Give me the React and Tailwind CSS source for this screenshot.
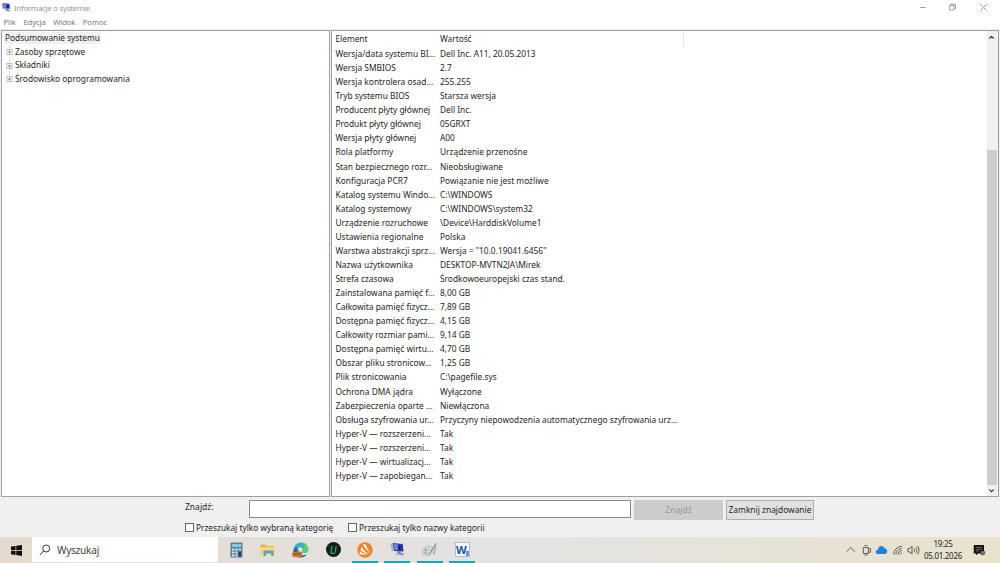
import React from "react";

const rows = [
  ["Wersja/data systemu BI...", "Dell Inc. A11, 20.05.2013"],
  ["Wersja SMBIOS", "2.7"],
  ["Wersja kontrolera osad...", "255.255"],
  ["Tryb systemu BIOS", "Starsza wersja"],
  ["Producent płyty głównej", "Dell Inc."],
  ["Produkt płyty głównej", "05GRXT"],
  ["Wersja płyty głównej", "A00"],
  ["Rola platformy", "Urządzenie przenośne"],
  ["Stan bezpiecznego rozr...", "Nieobsługiwane"],
  ["Konfiguracja PCR7", "Powiązanie nie jest możliwe"],
  ["Katalog systemu Windo...", "C:\\WINDOWS"],
  ["Katalog systemowy", "C:\\WINDOWS\\system32"],
  ["Urządzenie rozruchowe", "\\Device\\HarddiskVolume1"],
  ["Ustawienia regionalne", "Polska"],
  ["Warstwa abstrakcji sprz...", "Wersja = \"10.0.19041.6456\""],
  ["Nazwa użytkownika", "DESKTOP-MVTN2JA\\Mirek"],
  ["Strefa czasowa", "Środkowoeuropejski czas stand."],
  ["Zainstalowana pamięć f...", "8,00 GB"],
  ["Całkowita pamięć fizycz...", "7,89 GB"],
  ["Dostępna pamięć fizycz...", "4,15 GB"],
  ["Całkowity rozmiar pami...", "9,14 GB"],
  ["Dostępna pamięć wirtu...", "4,70 GB"],
  ["Obszar pliku stronicow...", "1,25 GB"],
  ["Plik stronicowania", "C:\\pagefile.sys"],
  ["Ochrona DMA jądra", "Wyłączone"],
  ["Zabezpieczenia oparte ...", "Niewłączona"],
  ["Obsługa szyfrowania ur...", "Przyczyny niepowodzenia automatycznego szyfrowania urz..."],
  ["Hyper-V — rozszerzeni...", "Tak"],
  ["Hyper-V — rozszerzeni...", "Tak"],
  ["Hyper-V — wirtualizacj...", "Tak"],
  ["Hyper-V — zapobiegan...", "Tak"],
];

function SystemIcon({ className }) {
  return (
    <svg className={className} viewBox="0 0 16 16">
      <path d="M.5 2l3-1 1.500 8.500-3 .5z" fill="#aab3cb" />
      <path d="M3 1L13.500 2 14.500 10 4.500 9.500z" fill="#2b3cb4" />
      <path d="M4 2l4 .4.500 6-3.700-.3z" fill="#6f8ae6" />
      <path d="M9 5l1.500-2 .8 6-2-.200zM12 3l.8.1.7 4-1-.2z" fill="#141c78" />
      <path d="M7.500 9.700l3.500.3.500 1.500 3.500 1-1.500 2-8-1.200 2.500-1.500z" fill="#7a8398" />
      <path d="M6.500 12.800l6.500 1" stroke="#d5d9e3" strokeWidth=".8" />
    </svg>
  );
}

function TreeNode({ label, last }) {
  return (
    <div className="flex h-[13.5px] items-center pl-[4px]">
      <svg className="mr-[2px] h-[13.5px] w-[7px] shrink-0" viewBox="0 0 7 13.500">
        <path d={last ? "M3.500 0V7" : "M3.500 0V13.500"} stroke="#b5b5b5" strokeWidth=".7" strokeDasharray="1 1" />
        <rect x=".9" y="4.400" width="5.200" height="5.200" fill="#fff" stroke="#b0b0b0" strokeWidth=".8" />
        <path d="M2 7h3M3.500 5.500v3" stroke="#777" strokeWidth=".8" />
      </svg>
      <span className="text-[8.35px]">{label}</span>
    </div>
  );
}

function Checkbox({ label, className }) {
  return (
    <label className={"flex items-center gap-[2px] " + className}>
      <span className="size-[9px] border border-[#666] bg-white" />
      <span>{label}</span>
    </label>
  );
}

function TaskItem({ children, running }) {
  return (
    <div className="relative flex h-full w-[32.3px] items-center justify-center pb-[1px]">
      {children}
      {running && <span className="absolute bottom-0 left-[3px] h-[2px] w-[26px] bg-[#22a5aa]" />}
    </div>
  );
}

export default function App() {
  return (
    <div className="flex h-[563px] w-[1000px] flex-col overflow-hidden bg-[#f0f0f0] font-['Noto_Sans','Open_Sans',sans-serif] text-[8.3px] leading-[14px] whitespace-nowrap text-[#262626]">
      <header className="flex h-[15px] shrink-0 items-center bg-white text-[#999]">
        <SystemIcon className="ml-[1px] h-[11px] w-[10px]" />
        <span className="ml-[3px] text-[7.9px] tracking-[-0.29px]">Informacje o systemie</span>
        <svg className="ml-auto h-[15px] w-[80px]" viewBox="0 0 80 15" fill="none" stroke="#999" strokeWidth=".9">
          <path d="M0 7.500h6" />
          <path d="M29.500 5.500h4.500v4.500h-4.500zM30.800 5.200V4.200h4.700v4.500h-1.200" />
          <path d="M60.500 4.500l6 6m0-6l-6 6" />
        </svg>
      </header>
      <nav className="flex h-[14px] shrink-0 items-center gap-[7.5px] bg-white pl-[3.5px] text-[7.6px] tracking-[-0.05px] text-[#777]">
        <span>Plik</span><span>Edycja</span><span>Widok</span><span>Pomoc</span>
      </nav>

      <main className="flex h-[468px] shrink-0 gap-[1px] px-[1px] pt-[1px]">
        <aside className="w-[329px] border border-[#a0a0a0] bg-white pt-[0.5px]">
          <div className="flex h-[13.5px] items-center pl-[2px]">
            <span className="bg-[#f0f0f0] px-[1px] leading-[12px]">Podsumowanie systemu</span>
          </div>
          <TreeNode label="Zasoby sprzętowe" />
          <TreeNode label="Składniki" />
          <TreeNode label="Środowisko oprogramowania" last />
        </aside>
        <section className="flex w-[668px] border border-[#a0a0a0] bg-white">
          <div className="flex-1 overflow-hidden">
            <div className="flex h-[16px] w-[352px] items-center border-r border-[#e5e5e5] pl-[3.5px]">
              <span className="w-[104.5px]">Element</span>
              <span>Wartość</span>
            </div>
            {rows.map(([name, value], i) => (
              <div key={i} className="flex h-[14.065px] items-center pl-[3.5px]">
                <span className="w-[104.5px] shrink-0 text-[8.4px]">{name}</span>
                <span className="text-[8.35px]">{value}</span>
              </div>
            ))}
          </div>
          <div className="flex w-[11px] flex-col bg-[#f0f0f0]">
            <svg className="h-[12px] w-[9px]" viewBox="0 0 9 12" fill="none" stroke="#444" strokeWidth="1.200"><path d="M2.300 7.500l2.200-2.200 2.200 2.200" /></svg>
            <div className="h-[107px]" />
            <div className="w-[10px] flex-1 bg-[#cdcdcd]" />
            <svg className="h-[11px] w-[9px]" viewBox="0 0 9 11" fill="none" stroke="#444" strokeWidth="1.200"><path d="M2.300 4.500l2.200 2.200 2.200-2.200" /></svg>
          </div>
        </section>
      </main>

      <section className="h-[40px] shrink-0 pt-[2px]">
        <div className="flex h-[20px] items-start pl-[185px]">
          <span className="w-[64px] pt-[1px] text-[8.5px]">Znajdź:</span>
          <span className="mt-[1px] h-[18px] w-[382px] border border-[#8a8a8a] bg-white" />
          <button className="mt-[1px] ml-[3px] h-[20px] w-[89px] bg-[#cccccc] text-[8.5px] text-[#999]">Znajdź</button>
          <button className="mt-[1px] ml-[3px] h-[20px] w-[88px] border border-[#adadad] bg-[#e1e1e1] text-[8.4px] leading-[18px]">Zamknij znajdowanie</button>
        </div>
        <div className="flex h-[16px] items-center pt-[1px] pl-[185px]">
          <Checkbox label="Przeszukaj tylko wybraną kategorię" className="w-[163px]" />
          <Checkbox label="Przeszukaj tylko nazwy kategorii" className="" />
        </div>
      </section>

      <footer className="flex h-[26px] shrink-0 bg-linear-to-r from-[#e5dacd] via-[#e4e3e3] to-[#e9e2cd]">
        <div className="flex w-[32px] items-center justify-center">
          <svg className="h-[11px] w-[11px]" viewBox="0 0 11 11"><path d="M0 1.600L4.600.9v4.200H0zM5.200.8L11 0v5.100H5.200zM0 5.700h4.600v4.300L0 9.300zM5.200 5.700H11V11l-5.800-.9z" fill="#111" /></svg>
        </div>
        <div className="flex h-[25px] w-[186px] items-center bg-white pl-[7px]">
          <svg className="h-[12px] w-[12px]" viewBox="0 0 12 12" fill="none" stroke="#333" strokeWidth="1"><circle cx="7.200" cy="4.500" r="3.500" /><path d="M4.700 7L.8 11" /></svg>
          <span className="ml-[6px] text-[10.1px] tracking-[-0.25px] text-[#444]">Wyszukaj</span>
        </div>
        <div className="ml-[2px] flex">
          <TaskItem>
            <svg className="h-[16px] w-[13px]" viewBox="0 0 13 16">
              <rect x=".5" y=".5" width="12" height="15" rx=".8" fill="#5e7e92" />
              <rect x="2" y="2" width="9" height="3" fill="#6cd4ee" />
              <path d="M2 6.500h2.300v2H2zM5.300 6.500h2.300v2H5.300zM2 9.500h2.300v2H2zM5.300 9.500h2.300v2H5.300zM2 12.500h2.300v2H2zM5.300 12.500h2.300v2H5.300zM8.700 6.500H11v2H8.700z" fill="#d7e3e8" />
              <path d="M8.700 9.500H11v5H8.700z" fill="#123f68" />
            </svg>
          </TaskItem>
          <TaskItem>
            <svg className="h-[14px] w-[16px]" viewBox="0 0 16 14">
              <path d="M.5 1.500h5l1.500 1.500H14v9H.5z" fill="#e9b548" />
              <path d="M.5 4h14.500v8H.5z" fill="#fbd877" />
              <path d="M3.500 7.500h10V13h-2.300v-2.700H5.800V13H3.500z" fill="#4ba3dc" />
            </svg>
          </TaskItem>
          <TaskItem>
            <svg className="h-[16px] w-[17px]" viewBox="0 0 17 16">
              <path d="M8.700.4c4.300 0 7.600 3.300 7.600 6.800 0 3-2.600 4.300-5 3.800-1.300-.300-1.500-1-.8-2 1-2-.5-3.700-3-3.700-3 0-5.500 2-6.200 3.700C1.300 4 4.500.4 8.700.4z" fill="#2fb5c4" />
              <path d="M10 .5c3.700.500 6.300 3.500 6.300 6.700 0 3-2.600 4.300-5 3.800-1.300-.300-1.500-1-.8-2C12.500 6 12.500 3 10 .5z" fill="#57cf6f" />
              <path d="M1.300 9C1.300 6.500 4 4.800 7 5.200 5 6.500 5 9.500 6.500 11.500c2 2.300 5.500 2.300 8.300.8-1.500 2.300-3.600 3.300-6 3.300C4.500 15.600 1.300 13 1.300 9z" fill="#1769bd" />
              <path d="M.5 9.800h9.300v5.300H.5z" fill="#c97829" />
              <path d="M3.300 9.800V8.600h3.400v1.200M.5 12h9.300" fill="none" stroke="#7c4216" strokeWidth=".8" />
            </svg>
          </TaskItem>
          <TaskItem>
            <div className="flex size-[15px] items-center justify-center rounded-full bg-[#0a2417] text-[10px] text-[#74b27b] italic">U</div>
          </TaskItem>
          <TaskItem running>
            <svg className="h-[16px] w-[16px]" viewBox="0 0 16 16">
              <circle cx="8" cy="8" r="7.700" fill="#f58220" />
              <path d="M6.100 2.600c.6-1 1.800-.9 2.300 0l4.800 8.700C10.500 9 7.500 6.200 6.100 2.600z" fill="#fff" />
              <path d="M4.900 5C6.200 8.200 9 10.700 12.500 12.200 9.500 11.700 6.500 10.700 3.900 8.400c-.9-.9.200-2.400 1-3.400z" fill="#fff" />
              <path d="M3 9.600c2.300 1.700 5 2.600 8.500 3H4c-1.500 0-1.900-1.800-1-3z" fill="#fff" />
            </svg>
          </TaskItem>
          <TaskItem running><SystemIcon className="h-[15px] w-[15px]" /></TaskItem>
          <TaskItem running>
            <svg className="h-[16px] w-[17px]" viewBox="0 0 17 16">
              <path d="M1.700 9c.6-4 6-6 9.500-4.300 1.700 1 .3 2.500.800 4 .4 2.500-2.500 5-6.300 5.100C2.700 13.800 1.200 11.500 1.700 9z" fill="#cfdce3" stroke="#a3b4bb" strokeWidth=".7" />
              <circle cx="4.700" cy="8" r="1.200" fill="#6fb277" /><circle cx="7.800" cy="6.300" r="1.100" fill="#dec26d" />
              <circle cx="4.500" cy="11" r="1.100" fill="#6da0cc" /><circle cx="7.700" cy="11.700" r="1" fill="#cf8676" />
              <path d="M15 1.500L9 11" stroke="#8d9290" strokeWidth="1.400" /><path d="M15 3l-2 10" stroke="#b0a898" strokeWidth="1.300" />
            </svg>
          </TaskItem>
          <TaskItem running>
            <div className="relative flex h-[15px] w-[15px] items-center border border-[#a9bfdc] bg-[#f5f9ff]">
              <span className="flex h-[11px] w-[11px] items-center justify-center text-[11px] font-bold text-[#1b5298]">W</span>
              <span className="absolute right-0 bottom-0 h-[5px] w-[3px] bg-[#6b9ad0]" />
            </div>
          </TaskItem>
        </div>
        <div className="ml-auto flex w-[155px] items-center">
          <svg className="h-[16px] w-[76px]" viewBox="0 0 76 16" fill="none" stroke="#444" strokeWidth=".85">
            <path d="M1.500 9.700l4.200-4.200L9.900 9.700" />
            <path d="M18.300 5.500h5v6h-5zM19.500 3.500h3M19.500 13h3M23.300 6.700h2.200v3.500h-2.200" />
            <path d="M33.500 12c-3.300 0-3.500-3.900-.6-4.300C33.500 3.300 38.200 3 39.600 6.300c3.200 0 3.700 5.700.3 5.700z" fill="#1683df" stroke="none" />
            <path d="M48.800 12.500c0-4.500 3.200-7.900 8.100-8.200M50.900 12.500c0-3.400 2.300-5.700 6-6M53 12.500c0-2.300 1.500-3.700 3.900-3.900M55 12.500c0-1 .8-1.700 1.900-1.800" />
            <path d="M63 6.500h1.800L67 4.200v8l-2.200-2.300H63zM69 6.500c.7 1 .7 2.500 0 3.500M70.800 5.200c1.400 1.700 1.400 4.300 0 6M72.600 4c2 2.500 2 6 0 8.500" />
          </svg>
          <div className="ml-[2px] flex w-[40px] flex-col items-center text-[8px] leading-[12px] tracking-[-0.3px]">
            <span>19:25</span><span>05.01.2026</span>
          </div>
          <svg className="ml-[10px] h-[12px] w-[13px]" viewBox="0 0 13 12">
            <path d="M.7 1h10.300v8.500H5L3 11.300V9.500H.7z" fill="#171717" />
            <path d="M3 3.500h6M3 5.300h6M3 7h3" stroke="#aaa" strokeWidth=".5" />
            <circle cx="9.600" cy="8.800" r="2.100" fill="#999" stroke="#222" strokeWidth=".7" /><path d="M8.300 10.200l2.600-2.700" stroke="#222" strokeWidth=".7" />
          </svg>
        </div>
      </footer>
    </div>
  );
}
